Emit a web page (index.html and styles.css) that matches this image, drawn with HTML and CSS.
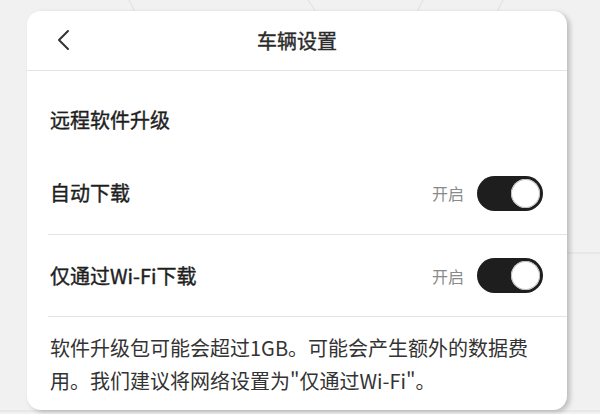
FILE: index.html
```html
<!DOCTYPE html>
<html lang="zh-CN">
<head>
  <meta charset="UTF-8" />
  <meta name="viewport" content="width=device-width, initial-scale=1.0">
  <title>车辆设置</title>
  <link rel="stylesheet" href="styles.css">
</head>
<body>

  <!-- 背景纹理线 -->
  <svg class="backdrop" width="600" height="414" viewBox="0 0 600 414">
    <path d="M129 0 L135 12 M308 0 L316 12 M423 0 L417 12 M503 0 L497 12 M567 253 L600 253 M0 411 L600 411" stroke="#dedede" stroke-width="1" fill="none"/>
  </svg>

  <div class="panel">
    <div class="panel-header">
      <button class="back-btn" aria-label="返回">
        <svg width="14" height="22" viewBox="0 0 14 22">
          <path d="M12 2 L3 11 L12 20" stroke="#333" stroke-width="2" fill="none" stroke-linecap="round" stroke-linejoin="round"/>
        </svg>
      </button>
      <h1 class="panel-title">车辆设置</h1>
    </div>

    <div class="section-title">远程软件升级</div>

    <div class="setting-row">
      <span class="setting-label">自动下载</span>
      <div class="setting-control">
        <span class="state-text">开启</span>
        <span class="toggle on"><span class="knob"></span></span>
      </div>
    </div>

    <div class="setting-row">
      <span class="setting-label">仅通过Wi-Fi下载</span>
      <div class="setting-control">
        <span class="state-text">开启</span>
        <span class="toggle on"><span class="knob"></span></span>
      </div>
    </div>

    <p class="note">软件升级包可能会超过1GB。可能会产生额外的数据费用。我们建议将网络设置为"仅通过Wi-Fi"。</p>
  </div>

</body>
</html>
```

FILE: styles.css
```css
:root {
  --bg: #f1f1f1;
  --card: #ffffff;
  --text: #1e1e1e;
  --muted: #8a8a8a;
  --line: #e4e4e4;
  --toggle: #1e1e1e;
}
body, html {
  margin: 0; padding: 0;
  width: 600px; height: 414px; overflow: hidden;
  background: var(--bg);
  font-family: 'Noto Sans CJK SC', 'Noto Sans', sans-serif;
  color: var(--text);
}
body {
  position: relative;
  padding-top: 11px;
  box-sizing: border-box;
}
.backdrop {
  position: absolute;
  top: 0; left: 0;
}
.panel {
  position: relative;
  margin-left: 27px;
  width: 540px;
  height: 399px;
  background: var(--card);
  border-radius: 14px;
  box-shadow: 3px 2px 5px rgba(0, 0, 0, 0.22);
  overflow: hidden;
}
.panel-header {
  height: 59px;
  border-bottom: 1px solid var(--line);
  display: flex;
  align-items: center;
  justify-content: center;
  position: relative;
}
.back-btn {
  position: absolute;
  left: 29px;
  top: 18px;
  border: none;
  background: none;
  padding: 0;
  display: flex;
}
.panel-title {
  margin: 0;
  font-size: 20px;
  font-weight: 400;
  line-height: 28px;
  color: #2a2a2a;
  -webkit-text-stroke: 0.4px #2a2a2a;
}
.section-title {
  font-size: 20px;
  line-height: 28px;
  padding: 35px 0 18px 23px;
  -webkit-text-stroke: 0.4px var(--text);
}
.setting-row {
  margin-left: 21px;
  padding: 0 24px 0 2px;
  height: 82px;
  border-bottom: 1px solid var(--line);
  display: flex;
  align-items: center;
  justify-content: space-between;
}
.setting-row + .setting-row {
  height: 81px;
}
.setting-label {
  font-size: 20px;
  line-height: 28px;
  -webkit-text-stroke: 0.4px var(--text);
}
.setting-control {
  display: flex;
  align-items: center;
  gap: 13px;
}
.state-text {
  font-size: 16px;
  color: var(--muted);
}
.toggle {
  width: 66px;
  height: 35px;
  border-radius: 18px;
  background: var(--toggle);
  display: flex;
  align-items: center;
  justify-content: flex-end;
  padding: 0 3px;
  box-sizing: border-box;
}
.knob {
  width: 29px;
  height: 29px;
  border-radius: 50%;
  background: #fff;
  box-shadow: 0 0 0 1px #bdbdbd inset;
}
.note {
  margin: 0;
  padding: 14px 4px 0 23px;
  font-size: 20px;
  line-height: 33px;
  color: #333;
}
```
